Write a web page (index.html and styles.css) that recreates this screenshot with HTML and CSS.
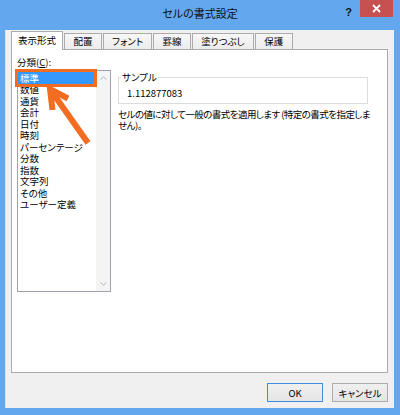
FILE: index.html
```html
<!DOCTYPE html>
<html lang="ja">
<head>
<meta charset="utf-8">
<title>セルの書式設定</title>
<link rel="stylesheet" href="styles.css">
</head>
<body>
<div class="window">
  <div class="titlebar">
    <div class="title">セルの書式設定</div>
    <div class="controls">
      <div class="help">?</div>
      <div class="close">
        <svg width="9" height="9" viewBox="0 0 9 9"><path d="M1 1 L8 8 M8 1 L1 8" stroke="#fff" stroke-width="1.8" fill="none"/></svg>
      </div>
    </div>
  </div>
  <div class="client">
    <div class="tabs">
      <div class="tab active">表示形式</div>
      <div class="tab">配置</div>
      <div class="tab">フォント</div>
      <div class="tab">罫線</div>
      <div class="tab">塗りつぶし</div>
      <div class="tab">保護</div>
    </div>
    <div class="panel">
      <div class="left">
        <div class="label">分類(<u>C</u>):</div>
        <div class="listbox">
          <ul class="items">
            <li class="sel">標準</li>
            <li>数値</li>
            <li>通貨</li>
            <li>会計</li>
            <li>日付</li>
            <li>時刻</li>
            <li>パーセンテージ</li>
            <li>分数</li>
            <li>指数</li>
            <li>文字列</li>
            <li>その他</li>
            <li>ユーザー定義</li>
          </ul>
          <div class="scrollbar">
            <svg width="7" height="4" viewBox="0 0 7 4"><path d="M0.5 3.5 L3.5 0.8 L6.5 3.5" stroke="#b4b4b4" stroke-width="1" fill="none"/></svg>
            <svg width="7" height="4" viewBox="0 0 7 4"><path d="M0.5 0.5 L3.5 3.2 L6.5 0.5" stroke="#b4b4b4" stroke-width="1" fill="none"/></svg>
          </div>
        </div>
      </div>
      <div class="right">
        <fieldset class="sample">
          <legend>サンプル</legend>
          <div class="value">1.112877083</div>
        </fieldset>
        <p class="desc">セルの値に対して一般の書式を適用します (特定の書式を指定しません)。</p>
      </div>
      <div class="mark"></div>
      <svg class="arrow" width="52" height="66" viewBox="0 0 52 66">
        <polyline points="24,15.5 6,6 8.5,27" stroke="#f26d21" stroke-width="6" fill="none" stroke-linejoin="miter"/>
        <line x1="7" y1="7.5" x2="44" y2="60" stroke="#f26d21" stroke-width="6"/>
      </svg>
    </div>
    <div class="buttons">
      <button class="btn default">OK</button>
      <button class="btn">キャンセル</button>
    </div>
  </div>
</div>
</body>
</html>
```
FILE: styles.css
```css
* { box-sizing: border-box; }
html, body { margin: 0; padding: 0; }
body {
  font-family: "Noto Sans CJK JP", "Noto Sans", sans-serif;
  font-feature-settings: "palt" 1;
  font-size: 9.5px;
  color: #000;
  background: #fff;
}
.window {
  width: 400px;
  height: 415px;
  background: #63a7ee;
  display: flex;
  flex-direction: column;
}
.titlebar {
  height: 30px;
  display: grid;
}
.title, .controls { grid-area: 1 / 1; }
.title {
  text-align: center;
  font-size: 11px;
  line-height: 26px;
  color: #111;
}
.controls {
  display: flex;
  justify-content: flex-end;
  align-items: flex-start;
  padding-right: 7px;
}
.help {
  font-family: "Liberation Sans", sans-serif;
  font-weight: bold;
  font-size: 11px;
  line-height: 24px;
  margin-right: 8px;
  color: #111;
}
.close {
  width: 33px;
  height: 17px;
  background: #c75050;
  display: flex;
  align-items: center;
  justify-content: center;
}
.client {
  margin: 0 6px;
  height: 378px;
  background: #f0f0f0;
  padding: 1px 6px 0 5px;
  display: flex;
  flex-direction: column;
  box-shadow: -1px 0 0 #d6e6f7;
}
.tabs {
  height: 18px;
  display: flex;
  align-items: flex-end;
  gap: 1px;
  position: relative;
  z-index: 2;
}
.tab {
  height: 16px;
  line-height: 15px;
  min-width: 38px;
  text-align: center;
  padding: 0 8px;
  border: 1px solid #acacac;
  border-bottom: none;
  background: linear-gradient(#f7f7f7, #ececec);
  white-space: nowrap;
}
.tab.active {
  height: 19px;
  margin-bottom: -1px;
  padding: 0 6px;
  line-height: 17px;
  background: #fff;
}
.panel {
  height: 324px;
  background: #fff;
  border: 1px solid #acacac;
  padding: 6px 0 0 5px;
  display: flex;
  position: relative;
}
.label {
  line-height: 12px;
  height: 12px;
  margin-bottom: 2px;
}
.label u { text-decoration-thickness: 1px; text-underline-offset: 1px; }
.listbox {
  width: 94px;
  height: 222px;
  border: 1px solid #9ea3ab;
  display: flex;
  background: #fff;
}
.items {
  list-style: none;
  margin: 0;
  padding: 1px 0 0 0;
  flex: 1;
}
.items li {
  line-height: 11.5px;
  height: 11.5px;
  padding-left: 2px;
  white-space: nowrap;
}
.items li.sel {
  background: #3399ff;
  color: #fff;
  height: 12px;
  line-height: 12px;
}
.scrollbar {
  width: 14px;
  background: #f4f4f4;
  display: flex;
  flex-direction: column;
  justify-content: space-between;
  align-items: center;
  padding: 5px 0 5px;
}
.scrollbar svg { display: block; }
.right {
  margin-left: 7px;
  width: 256px;
}
.sample {
  margin: 15px 0 0 0;
  width: 250px;
  border: 1px solid #dcdcdc;
  padding: 4px 8px 4px 8px;
  min-inline-size: 0;
}
.sample legend {
  padding: 0 1px;
  margin-left: -6px;
  line-height: 12px;
}
.value {
  line-height: 12px;
}
.desc {
  margin: 5px 0 0 0;
  line-height: 10.5px;
  width: 254px;
  letter-spacing: -0.55px;
}
.mark {
  position: absolute;
  left: 3px;
  top: 19px;
  width: 82px;
  height: 18px;
  border: 3px solid #f26d21;
}
.arrow {
  position: absolute;
  left: 32px;
  top: 33px;
}
.buttons {
  display: flex;
  justify-content: flex-end;
  gap: 9px;
  margin-top: 10px;
}
.btn {
  width: 56px;
  height: 19px;
  font: inherit;
  font-size: 9.5px;
  border: 1px solid #acacac;
  background: linear-gradient(#f0f0f0, #e5e5e5);
  padding: 0;
  color: #000;
}
.btn.default {
  border-color: #3c8de0;
}
```
